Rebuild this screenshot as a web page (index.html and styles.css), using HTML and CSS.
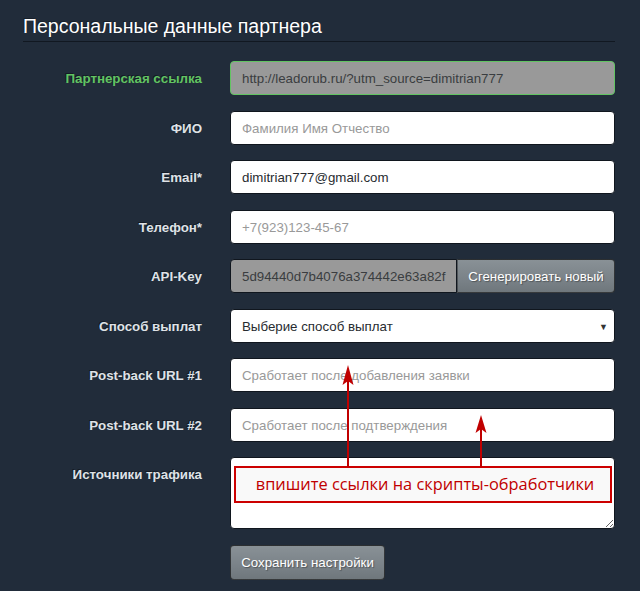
FILE: index.html
```html
<!DOCTYPE html>
<html lang="ru">
<head>
<meta charset="utf-8">
<link rel="stylesheet" href="styles.css">
</head>
<body>
<div class="page">
  <h2 class="title">Персональные данные партнера</h2>
  <form class="form">
    <div class="row">
      <label class="lbl lbl-ok">Партнерская ссылка</label>
      <div class="field ctl ctl-ro ctl-ok">http://leadorub.ru/?utm_source=dimitrian777</div>
    </div>
    <div class="row">
      <label class="lbl">ФИО</label>
      <div class="field ctl ph">Фамилия Имя Отчество</div>
    </div>
    <div class="row">
      <label class="lbl">Email*</label>
      <div class="field ctl">dimitrian777@gmail.com</div>
    </div>
    <div class="row">
      <label class="lbl">Телефон*</label>
      <div class="field ctl ph">+7(923)123-45-67</div>
    </div>
    <div class="row">
      <label class="lbl">API-Key</label>
      <div class="field group">
        <div class="ctl ctl-ro ctl-left">5d94440d7b4076a374442e63a82f</div>
        <button type="button" class="btn btn-right">Сгенерировать новый</button>
      </div>
    </div>
    <div class="row">
      <label class="lbl">Способ выплат</label>
      <div class="field ctl sel"><span>Выберие способ выплат</span><span class="caret">▼</span></div>
    </div>
    <div class="row">
      <label class="lbl">Post-back URL #1</label>
      <div class="field ctl ph">Сработает после добавления заявки</div>
    </div>
    <div class="row">
      <label class="lbl">Post-back URL #2</label>
      <div class="field ctl ph">Сработает после подтверждения</div>
    </div>
    <div class="row row-ta">
      <label class="lbl">Источники трафика</label>
      <div class="field ta-wrap">
        <textarea class="ta"></textarea>
        <div class="note">впишите ссылки на скрипты-обработчики</div>
      </div>
    </div>
    <div class="row row-btn">
      <div></div>
      <div class="field"><button type="button" class="btn btn-save">Сохранить настройки</button></div>
    </div>
  </form>
  <svg class="arrows" width="640" height="591" viewBox="0 0 640 591">
    <line x1="348" y1="467" x2="348" y2="376" stroke="#c00000" stroke-width="2"/>
    <polygon points="348,365 353.5,385 348,381 342.5,385" fill="#c00000"/>
    <line x1="481" y1="467" x2="481" y2="424" stroke="#c00000" stroke-width="2"/>
    <polygon points="481,415 486.5,433 481,429 475.5,433" fill="#c00000"/>
  </svg>
</div>
</body>
</html>
```
FILE: styles.css
```css
html, body {
  margin: 0;
  padding: 0;
  background: #212c3a;
}
body {
  font-family: "Liberation Sans", Arial, sans-serif;
  width: 640px;
  height: 591px;
  overflow: hidden;
}
.page {
  position: relative;
  padding: 15px 25px 0 23px;
  height: 576px;
}
.title {
  margin: 0;
  font-size: 19.5px;
  font-weight: normal;
  line-height: 22px;
  color: #ffffff;
  text-shadow: -1px -1px 0 rgba(0,0,0,0.3);
  padding-bottom: 4px;
  border-bottom: 1px solid #111821;
}
.form {
  margin-top: 19px;
  display: flex;
  flex-direction: column;
  gap: 15.5px;
}
.row {
  display: grid;
  grid-template-columns: 179px 385px;
  column-gap: 28px;
}
.lbl {
  text-align: right;
  font-weight: bold;
  font-size: 13.3px;
  line-height: 20px;
  padding-top: 8px;
  color: #dfe2e6;
  text-shadow: -1px -1px 0 rgba(0,0,0,0.4);
}
.lbl-ok {
  color: #62c462;
}
.ctl {
  box-sizing: border-box;
  height: 34px;
  padding: 7px 12px 6px 11px;
  font-size: 13.3px;
  line-height: 20px;
  color: #272b30;
  background: #ffffff;
  border: 1px solid #10161e;
  border-radius: 4px;
  white-space: nowrap;
  overflow: hidden;
}
.ph {
  color: #999999;
}
.ctl-ro {
  background: #999999;
  color: #3a3d40;
}
.ctl-ok {
  border-color: #62c462;
}
.group {
  display: flex;
}
.ctl-left {
  flex: 1;
  border-radius: 4px 0 0 4px;
  padding-right: 2px;
}
.btn {
  box-sizing: border-box;
  height: 34px;
  font-family: "Liberation Sans", Arial, sans-serif;
  font-size: 13.3px;
  color: #ffffff;
  text-shadow: 1px 1px 1px rgba(0,0,0,0.35);
  background-image: linear-gradient(#899196, #7a8288 60%, #6f777c);
  border: 1px solid rgba(0,0,0,0.6);
  border-radius: 4px;
  padding: 6px 8px;
  white-space: nowrap;
  cursor: pointer;
}
.btn-right {
  width: 158px;
  border-radius: 0 4px 4px 0;
  border-left: 1px solid rgba(0,0,0,0.35);
}
.btn-save {
  width: 155px;
  height: 35px;
}
.row-btn {
  margin-top: 0.5px;
}
.sel {
  display: flex;
  justify-content: space-between;
  color: #272b30;
  padding-right: 6px;
}
.caret {
  font-size: 9px;
  line-height: 20px;
  color: #333;
}
.ta-wrap {
  position: relative;
  height: 72px;
}
.ta {
  box-sizing: border-box;
  display: block;
  width: 385px;
  height: 72px;
  margin: 0;
  border: 1px solid #10161e;
  border-radius: 4px;
  background: #ffffff;
  padding: 6px 12px;
  font-family: "Liberation Sans", Arial, sans-serif;
  font-size: 14px;
  resize: vertical;
}
.note {
  position: absolute;
  left: 4px;
  right: 3px;
  top: 9px;
  height: 37px;
  box-sizing: border-box;
  border: 2px solid #cc0000;
  background: #f9f9f9;
  color: #c00000;
  font-family: "Open Sans", "Noto Sans", sans-serif;
  font-size: 16.4px;
  line-height: 32px;
  text-align: center;
  padding-left: 4px;
}
.arrows {
  position: absolute;
  left: 0;
  top: 0;
  pointer-events: none;
}
```
